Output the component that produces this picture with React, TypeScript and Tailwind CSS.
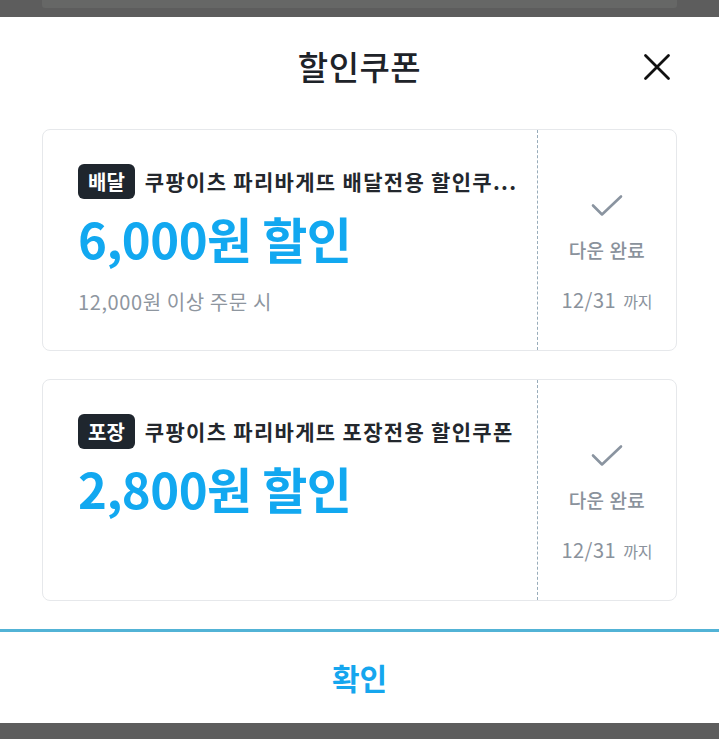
import React from "react";

const CheckIcon = () => (
  <svg width="32" height="24" viewBox="0 0 32 24" fill="none">
    <path d="M2 11.5 L11 20.5 L30 2.5" stroke="#8a94a0" strokeWidth="2.6" strokeLinecap="round" strokeLinejoin="round" />
  </svg>
);

type Coupon = { tag: string; title: string; amount: string; min?: string };

const coupons: Coupon[] = [
  { tag: "배달", title: "쿠팡이츠 파리바게뜨 배달전용 할인쿠...", amount: "6,000원 할인", min: "12,000원 이상 주문 시" },
  { tag: "포장", title: "쿠팡이츠 파리바게뜨 포장전용 할인쿠폰", amount: "2,800원 할인" },
];

function CouponCard({ c }: { c: Coupon }) {
  return (
    <div className="flex h-[222px] rounded-[8px] border border-[#e6e8eb] bg-white">
      <div className="flex w-[494px] flex-col pl-[35px] pr-[10px] pt-[34px]">
        <div className="flex items-center gap-[10px]">
          <span className="flex h-[35px] shrink-0 items-center rounded-[6px] bg-[#1f262e] px-[10px] text-[20px] font-bold leading-none text-white">
            {c.tag}
          </span>
          <span className="whitespace-nowrap text-[21px] font-semibold leading-none tracking-[1.3px] text-[#23272d]">{c.title}</span>
        </div>
        <div className="mt-[9px] text-[49px] font-semibold leading-[60px] tracking-[-0.5px] text-[#12a8f0]">{c.amount}</div>
        {c.min && <div className="mt-[24px] text-[20px] leading-none tracking-[0.6px] text-[#8e969f]">{c.min}</div>}
      </div>
      <div className="w-0 border-l border-dashed border-[#98acba]" />
      <div className="flex flex-1 flex-col items-center pt-[64px]">
        <CheckIcon />
        <div className="mt-[22px] text-[19px] font-medium leading-none tracking-[0.5px] text-[#8a929c]">다운 완료</div>
        <div className="mt-[31px] flex items-baseline gap-[7px] leading-none text-[#8a929c]">
          <span className="text-[20px] tracking-[0.5px]">12/31</span>
          <span className="text-[16px]">까지</span>
        </div>
      </div>
    </div>
  );
}

export default function App() {
  return (
    <div className="flex h-[739px] w-[719px] flex-col bg-white font-['Noto_Sans_CJK_KR','Noto_Sans',sans-serif]">
      <div className="h-[17px] bg-[#5d5d5d]">
        <div className="mx-[42px] h-[8px] rounded-b-[3px] bg-[#666766]" />
      </div>
      <div className="relative flex h-[100px] items-center justify-center">
        <span className="text-[33px] font-medium tracking-[0.5px] text-[#1e2329]">할인쿠폰</span>
        <svg className="absolute right-[48px] top-[36px]" width="28" height="28" viewBox="0 0 28 28">
          <path d="M2.5 2.5 L25.5 25.5 M25.5 2.5 L2.5 25.5" stroke="#111" strokeWidth="2.8" strokeLinecap="round" />
        </svg>
      </div>
      <div className="mt-[12px] flex flex-col gap-[28px] px-[42px]">
        {coupons.map((c) => (
          <CouponCard key={c.tag} c={c} />
        ))}
      </div>
      <div className="mt-[28px] h-[3px] bg-[#52b3d6]" />
      <div className="flex h-[91px] items-center justify-center">
        <span className="text-[30px] font-bold text-[#15a6ee]">확인</span>
      </div>
      <div className="flex-1 bg-[#5d5d5d]" />
    </div>
  );
}
